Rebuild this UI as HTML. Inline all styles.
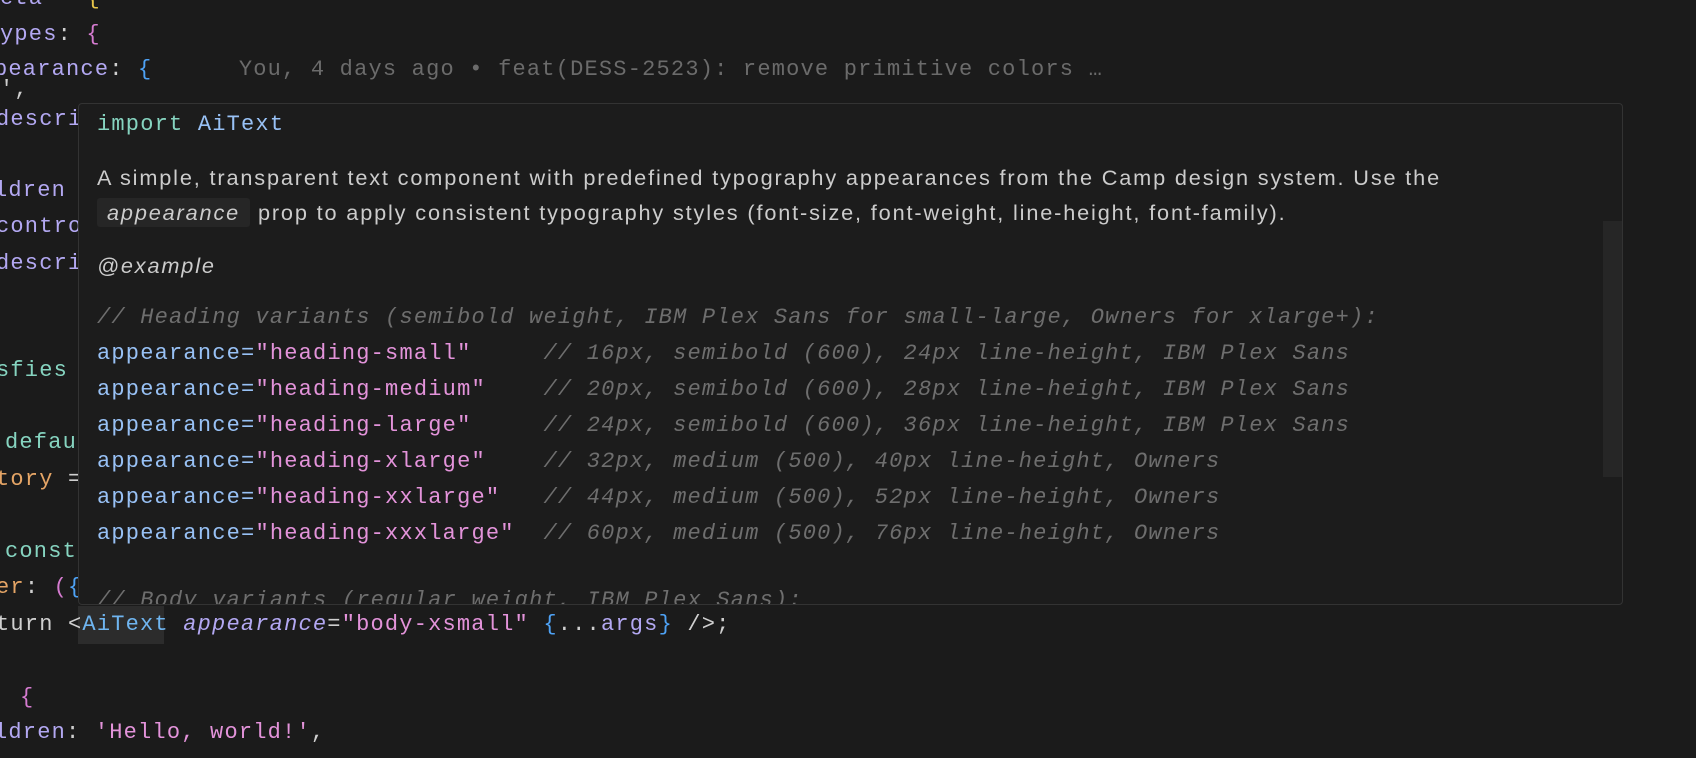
<!DOCTYPE html>
<html><head><meta charset="utf-8"><style>
html,body{margin:0;padding:0;background:#1b1b1b;width:1696px;height:758px;overflow:hidden;position:relative}
.m{font-family:"Liberation Mono",monospace;font-size:22px;letter-spacing:1.2px;white-space:pre;position:absolute;line-height:36px}
.l{color:#b3a8f2}.w{color:#cfcfcf}.pk{color:#d57bd0}.bl{color:#4ea2f5}.tl{color:#86d4c0}.or{color:#e5a566}.st{color:#e393da}.ye{color:#e8c64a}
.pop{position:absolute;left:78px;top:103px;width:1543px;height:500px;background:#1c1c1c;border:1px solid #333;border-radius:4px;overflow:hidden}
.p{font-family:"Liberation Sans",sans-serif;font-size:21.7px;letter-spacing:1.85px;color:#cccccc;position:absolute;left:18px;white-space:nowrap}
.c{color:#6e6e6e;font-style:italic}.a{color:#98c1f5}
</style></head><body>
<div class="m" style="left:0;top:-19px"><span class="l">eta</span><span class="w"> = </span><span class="ye">{</span></div>
<div class="m" style="left:0;top:17px"><span class="l">ypes</span><span class="w">: </span><span class="pk">{</span></div>
<div class="m" style="left:-6px;top:52px"><span class="l">pearance</span><span class="w">: </span><span class="bl">{</span><span style="color:#6b6b6b">      You, 4 days ago • feat(DESS-2523): remove primitive colors …</span></div>
<div class="m w" style="left:0;top:72px">',</div>
<div class="m l" style="left:-4px;top:102px">descri</div>
<div class="m l" style="left:-6px;top:173px">ldren</div>
<div class="m l" style="left:-4px;top:209px">contro</div>
<div class="m l" style="left:-4px;top:246px">descri</div>
<div class="m tl" style="left:-4px;top:353px">sfies</div>
<div class="m tl" style="left:5px;top:425px">defau</div>
<div class="m" style="left:-4px;top:462px"><span class="or">tory</span><span class="w"> =</span></div>
<div class="m tl" style="left:5px;top:534px">const</div>
<div class="m" style="left:-4px;top:570px"><span class="or">er</span><span class="w">: </span><span class="pk">(</span><span class="bl">{</span></div>
<div style="position:absolute;left:78px;top:606px;width:86px;height:38px;background:#2c2c2c"></div>
<div class="m" style="left:-4px;top:607px"><span class="w">turn &lt;</span><span style="color:#6fb5f0">AiText</span> <span class="l" style="font-style:italic">appearance</span><span class="w">=</span><span class="st">"body-xsmall"</span> <span class="bl">{</span><span class="w">...</span><span class="l">args</span><span class="bl">}</span><span class="w"> /&gt;;</span></div>
<div class="m pk" style="left:20px;top:680px">{</div>
<div class="m" style="left:-6px;top:715px"><span class="l">ldren</span><span class="w">: </span><span class="st">'Hello, world!'</span><span class="w">,</span></div>

<div class="pop">
<div class="m" style="left:18px;top:3px;font-size:22px"><span class="tl">import</span> <span class="a">AiText</span></div>
<div class="p" style="top:61px">A simple, transparent text component with predefined typography appearances from the Camp design system. Use the</div>
<div class="p" style="top:96px"><span style="background:#262626;padding:2px 10px;border-radius:3px;font-style:italic">appearance</span> prop to apply consistent typography styles (font-size, font-weight, line-height, font-family).</div>
<div class="p" style="top:149px;font-style:italic">@example</div>
<div class="m c" style="left:18px;top:196px">// Heading variants (semibold weight, IBM Plex Sans for small-large, Owners for xlarge+):</div>
<div class="m" style="left:18px;top:232px"><span class="a">appearance=</span><span class="st">"heading-small"</span>     <span class="c">// 16px, semibold (600), 24px line-height, IBM Plex Sans</span></div>
<div class="m" style="left:18px;top:268px"><span class="a">appearance=</span><span class="st">"heading-medium"</span>    <span class="c">// 20px, semibold (600), 28px line-height, IBM Plex Sans</span></div>
<div class="m" style="left:18px;top:304px"><span class="a">appearance=</span><span class="st">"heading-large"</span>     <span class="c">// 24px, semibold (600), 36px line-height, IBM Plex Sans</span></div>
<div class="m" style="left:18px;top:340px"><span class="a">appearance=</span><span class="st">"heading-xlarge"</span>    <span class="c">// 32px, medium (500), 40px line-height, Owners</span></div>
<div class="m" style="left:18px;top:376px"><span class="a">appearance=</span><span class="st">"heading-xxlarge"</span>   <span class="c">// 44px, medium (500), 52px line-height, Owners</span></div>
<div class="m" style="left:18px;top:412px"><span class="a">appearance=</span><span class="st">"heading-xxxlarge"</span>  <span class="c">// 60px, medium (500), 76px line-height, Owners</span></div>
<div class="m c" style="left:18px;top:479px">// Body variants (regular weight, IBM Plex Sans):</div>
<div style="position:absolute;left:1524px;top:117px;width:19px;height:256px;background:#262626"></div>
</div>
</body></html>
